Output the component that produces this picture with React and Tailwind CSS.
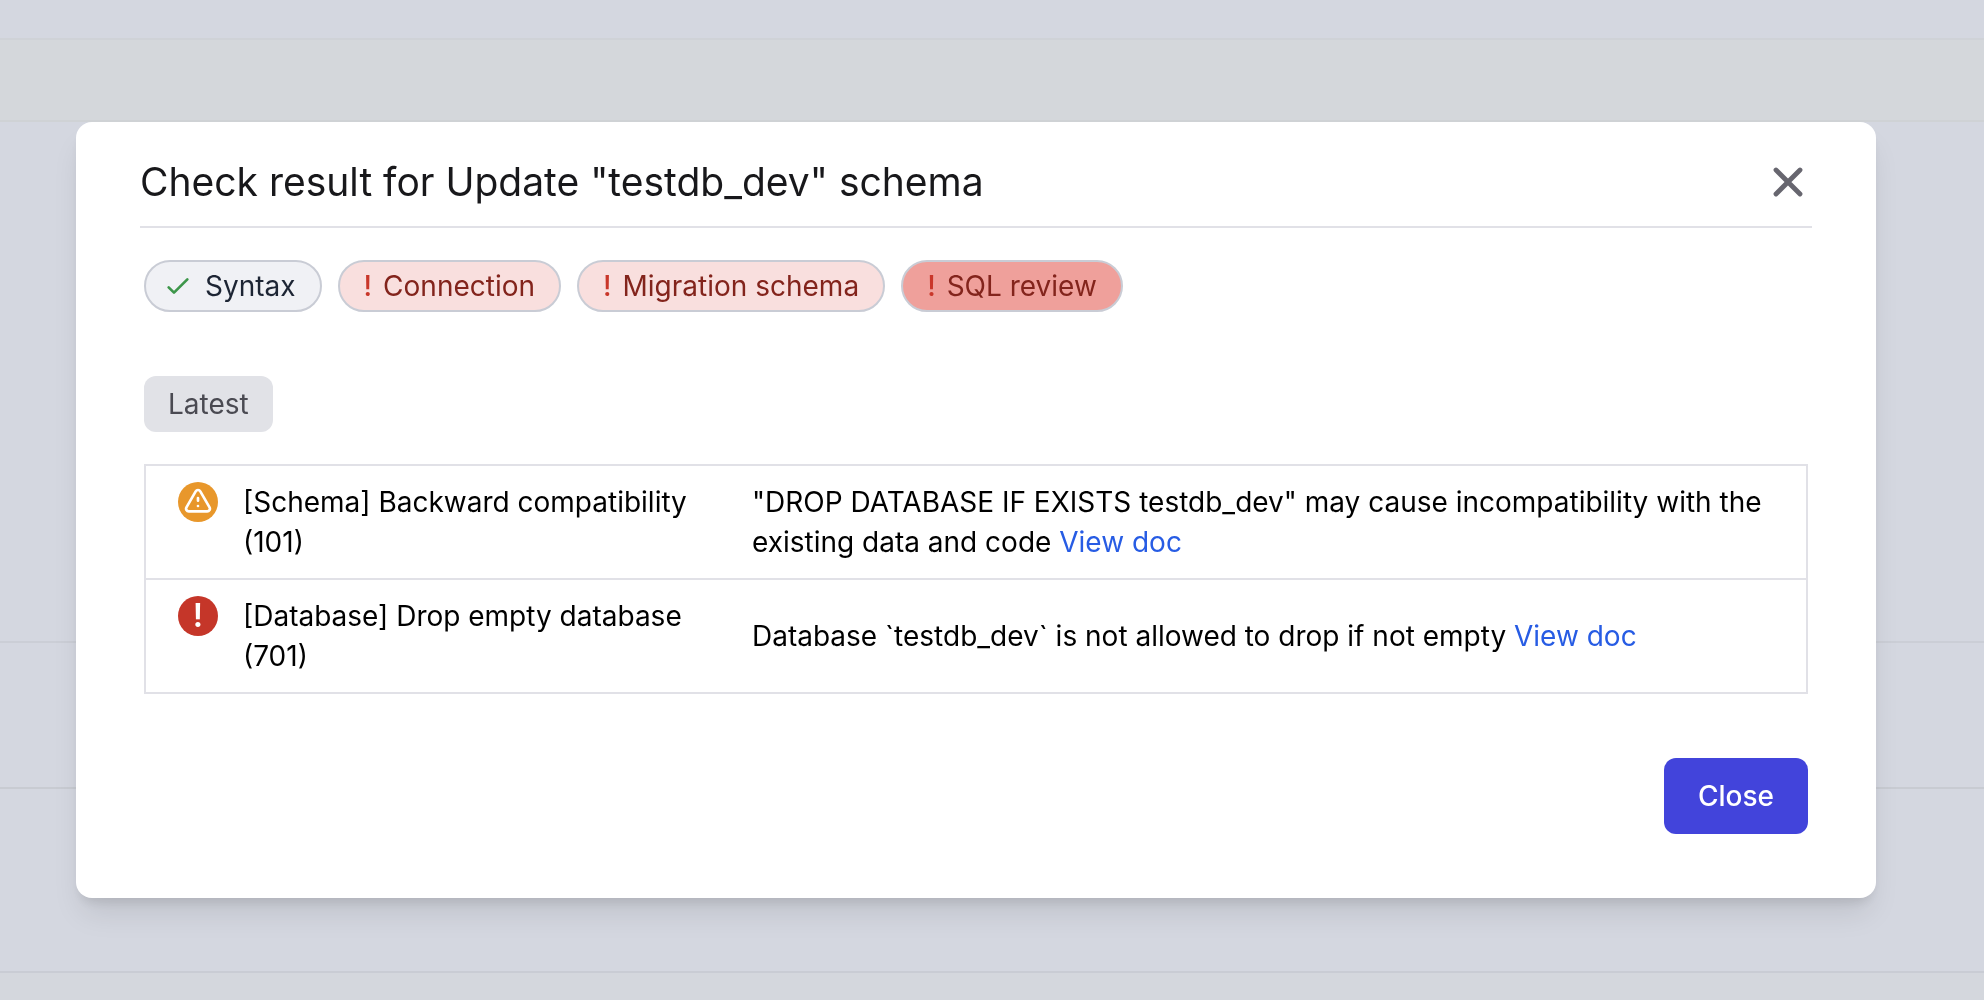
// src/components/CheckResultModal.jsx
import { useState } from 'react';

const TABS = [
  { id: 'syntax', label: 'Syntax', status: 'success' },
  { id: 'connection', label: 'Connection', status: 'error' },
  { id: 'migration', label: 'Migration schema', status: 'error' },
  { id: 'review', label: 'SQL review', status: 'error' },
];

const RESULTS = [
  {
    id: 101,
    status: 'warning',
    title: '[Schema] Backward compatibility (101)',
    content: '"DROP DATABASE IF EXISTS testdb_dev" may cause incompatibility with the existing data and code',
  },
  {
    id: 701,
    status: 'error',
    title: '[Database] Drop empty database (701)',
    content: 'Database `testdb_dev` is not allowed to drop if not empty',
  },
];

function StrokeIcon({ d, className, strokeWidth = 2 }) {
  return (
    <svg
      className={className}
      viewBox="0 0 24 24"
      fill="none"
      stroke="currentColor"
      strokeWidth={strokeWidth}
      strokeLinecap="round"
      strokeLinejoin="round"
      aria-hidden="true"
    >
      <path d={d} />
    </svg>
  );
}

function StatusIcon({ status }) {
  if (status === 'warning') {
    return (
      <span className="flex h-10 w-10 items-center justify-center rounded-full bg-[#e8972b] text-white">
        <StrokeIcon
          className="h-8 w-8"
          d="M12 9v2m0 4h.01m-6.938 4h13.856c1.54 0 2.502-1.667 1.732-3L13.732 4c-.77-1.333-2.694-1.333-3.464 0L3.34 16c-.77 1.333.192 3 1.732 3z"
        />
      </span>
    );
  }
  return (
    <span className="flex h-10 w-10 items-center justify-center rounded-full bg-[#c53629] text-[32px] leading-10 font-semibold text-white">
      !
    </span>
  );
}

function CheckTab({ tab, selected, onClick }) {
  if (tab.status === 'success') {
    return (
      <button
        onClick={onClick}
        className="flex h-[52px] items-center gap-[11px] rounded-full border-2 border-[#c9ccd5] bg-[#f0f1f5] pr-6 pl-4 text-[28px] leading-10 text-[#1d2534]"
      >
        <StrokeIcon className="h-8 w-8 text-[#3d964a]" d="M5 13l4 4L19 7" />
        {tab.label}
      </button>
    );
  }
  return (
    <button
      onClick={onClick}
      className={`flex h-[52px] items-center gap-[11px] rounded-full border-2 border-[#c9ccd5] px-6 text-[28px] leading-10 text-[#83241c] ${
        selected ? 'bg-[#efa09b]' : 'bg-[#f9dfde]'
      }`}
    >
      <span className="font-medium text-[#c9372a]">!</span>
      {tab.label}
    </button>
  );
}

function PageBackdrop() {
  return (
    <div className="flex min-h-screen flex-col bg-[#d4d7e0]">
      <div className="h-10 border-b-2 border-[#cfd2d7]" />
      <div className="h-[82px] border-b-2 border-[#cfd2d5] bg-[#d4d7db]" />
      <div className="h-[521px] border-b-2 border-[#cbced6]" />
      <div className="h-[146px] border-b-2 border-[#c8cbd2]" />
      <div className="h-[184px] border-b-2 border-[#c9ccd4]" />
      <div className="flex-1 bg-[#d4d7dd]" />
    </div>
  );
}

export default function App() {
  const [activeTab, setActiveTab] = useState('review');

  return (
    <div className="font-['Inter',sans-serif]">
      <PageBackdrop />

      <div className="fixed inset-0 overflow-auto pt-[122px] pr-[108px] pl-[76px]">
        <div
          role="dialog"
          aria-labelledby="dialog-title"
          className="rounded-2xl bg-white px-16 pt-8 pb-16 shadow-[0_20px_30px_-6px_rgba(0,0,0,0.1),0_8px_12px_-4px_rgba(0,0,0,0.1)]"
        >
          <div className="flex items-start justify-between border-b-2 border-[#e1e1e7] pb-4">
            <h1 id="dialog-title" className="text-[39px] leading-14 text-[#18181b]">
              Check result for Update "testdb_dev" schema
            </h1>
            <button aria-label="Close dialog" className="mt-1 text-[#67666f]">
              <StrokeIcon className="h-12 w-12" strokeWidth={2.4} d="M6 18L18 6M6 6l12 12" />
            </button>
          </div>

          <div className="px-1 pt-8">
            <div className="flex flex-wrap gap-4">
              {TABS.map((tab) => (
                <CheckTab
                  key={tab.id}
                  tab={tab}
                  selected={activeTab === tab.id}
                  onClick={() => setActiveTab(tab.id)}
                />
              ))}
            </div>

            <button className="mt-16 block h-14 rounded-xl bg-[#e1e2e7] px-6 text-[28px] leading-10 text-[#4a4a52]">
              Latest
            </button>

            <table className="mt-8 w-full table-fixed border-collapse border-2 border-[#e1e1e7] text-[28px] leading-10 text-black">
              <colgroup>
                <col className="w-[98px]" />
                <col className="w-[509px]" />
                <col />
              </colgroup>
              <tbody>
                {RESULTS.map((result) => (
                  <tr key={result.id} className="border-b-2 border-[#e1e1e7]">
                    <td className="py-4 pl-8 align-top">
                      <StatusIcon status={result.status} />
                    </td>
                    <td className="py-4 pr-8">{result.title}</td>
                    <td className="py-4 pr-8">
                      {result.content}{' '}
                      <a href="#doc" className="text-[#275ce4]">View doc</a>
                    </td>
                  </tr>
                ))}
              </tbody>
            </table>

            <div className="mt-16 flex justify-end">
              <button className="h-[76px] rounded-xl bg-[#4244db] px-[34px] text-[28px] leading-10 font-medium text-white">
                Close
              </button>
            </div>
          </div>
        </div>
      </div>
    </div>
  );
}
